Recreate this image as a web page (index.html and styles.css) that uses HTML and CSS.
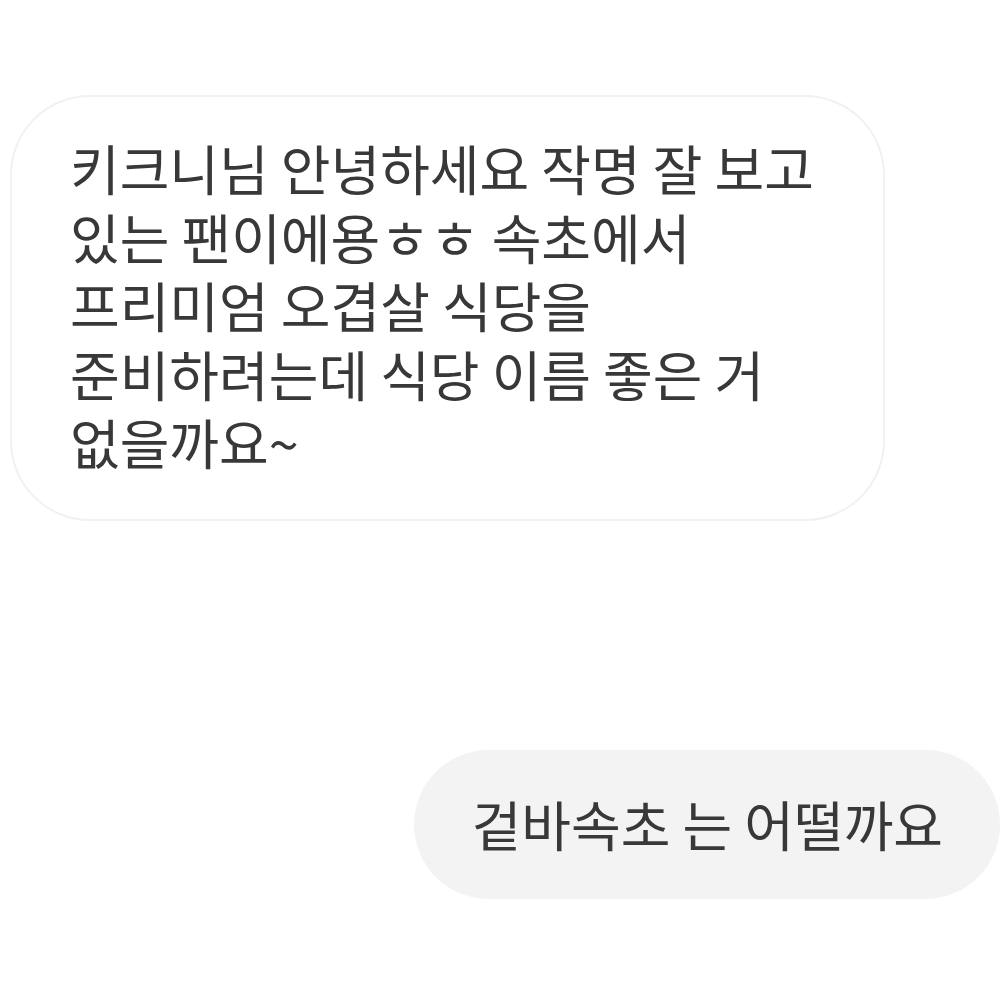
FILE: index.html
```html
<!doctype html>
<html>
<head>
    <meta charset="utf-8">
    <title>DM</title>
    <link rel="stylesheet" href="styles.css">
</head>
<body class="dm-body">
<div class="dm-thread">
    <div class="dm-bubble dm-in">
        <p class="dm-text">키크니님 안녕하세요 작명 잘 보고<br>있는 팬이에용ㅎㅎ 속초에서<br>프리미엄 오겹살 식당을<br>준비하려는데 식당 이름 좋은 거<br>없을까요~</p>
    </div>

    <div class="dm-bubble dm-out">
        <p class="dm-text">겉바속초 는 어떨까요</p>
    </div>
</div>
</body>
</html>
```

FILE: styles.css
```css
.dm-body {
    margin: 0;
    background: #fff;
    overflow: hidden;
    font-family: "Noto Sans CJK KR", "Noto Sans", sans-serif;
    color: #383838;
}

.dm-thread {
    display: flex;
    flex-direction: column;
    padding: 95px 0 0 10px;
}

.dm-bubble {
    box-sizing: border-box;
}

/* received message */
.dm-in {
    width: 875px;
    padding: 37px 40px 42px 58px;
    border: 2px solid #f1f1f1;
    border-radius: 80px;
    background: #fff;
}

/* sent message */
.dm-out {
    align-self: flex-end;
    margin-top: 229px;
    height: 149px;
    padding: 0 57px 0 58px;
    display: flex;
    align-items: center;
    border-radius: 75px;
    background: #f3f3f3;
}

.dm-text {
    margin: 0;
    font-size: 54px;
    line-height: 68.5px;
    white-space: nowrap;
}
```
